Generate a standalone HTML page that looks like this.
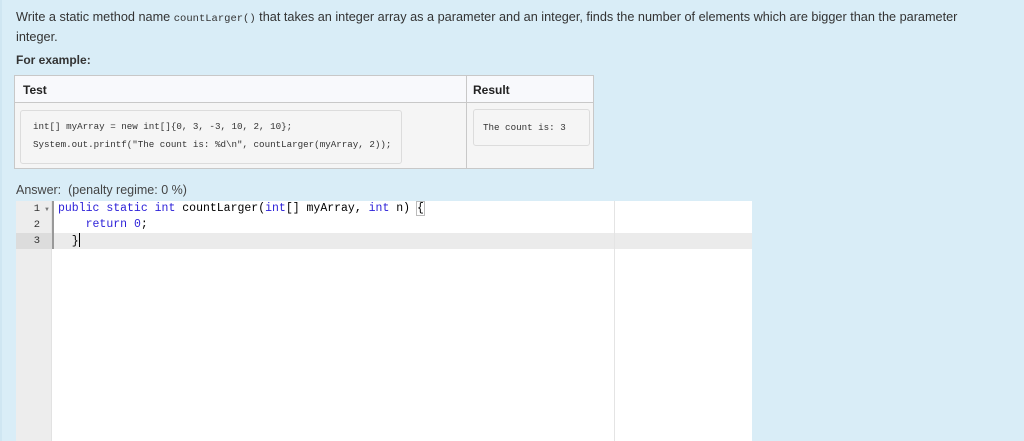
<!DOCTYPE html>
<html><head><meta charset="utf-8"><style>
*{margin:0;padding:0;box-sizing:border-box}
html,body{width:1024px;height:441px;overflow:hidden;background:#d9edf7;font-family:"Liberation Sans",Arial,sans-serif;color:#333}
.left{position:absolute;left:0;top:0;width:2px;height:441px;background:#cfe6f2}
.p{position:absolute;left:16px;top:8px;width:960px;font-size:12.7px;line-height:18px}
.p code{font-family:"Liberation Mono",monospace;font-size:10.5px;letter-spacing:0}
.fe{position:absolute;left:16px;top:53px;font-size:12px;font-weight:bold}
.tbl{position:absolute;left:14px;top:75px;width:580px;height:94px;border:1px solid #c8c8c8;background:#f5f5f5}
.hd{position:absolute;left:0;top:0;width:578px;height:27px;background:#f8f9fc;border-bottom:1px solid #c8c8c8}
.vd{position:absolute;left:451px;top:0;width:1px;height:92px;background:#c8c8c8}
.th{position:absolute;top:7px;font-size:12px;font-weight:bold;color:#222}
.pre{position:absolute;background:#f5f5f5;border:1px solid #dcdcdc;border-radius:3px;font-family:"Liberation Mono",monospace;font-size:9.2px;color:#333;white-space:pre;line-height:18px}
.ans{position:absolute;left:16px;top:183px;font-size:12.5px;color:#444}
.ed{position:absolute;left:16px;top:201px;width:736px;height:240px;background:#fff}
.gut{position:absolute;left:0;top:0;width:36px;height:240px;background:#ededed;border-right:1px solid #e2e2e2}
.gl{position:absolute;left:0;width:36px;height:16px;font-family:"Liberation Mono",monospace;font-size:10.5px;line-height:16px;text-align:right;padding-right:12px;color:#333}
.gbar{position:absolute;left:36px;top:0;width:2px;height:48px;background:#999}
.hl{position:absolute;left:38px;top:32px;width:698px;height:16px;background:#ebebeb}
.pm{position:absolute;left:598px;top:0;width:1px;height:240px;background:#e4e4e4}
.cl{position:absolute;left:42px;height:16px;font-family:"Liberation Mono",monospace;font-size:11.5px;line-height:16px;white-space:pre;color:#000}
.k{color:#2b1fd8}
.n{color:#2b1fd8}
</style></head><body>
<div class="left"></div>
<div class="p">Write a static method name <code>countLarger()</code> that takes an integer array as a parameter and an integer, finds the number of elements which are bigger than the parameter integer.</div>
<div class="fe">For example:</div>
<div class="tbl">
 <div class="hd"></div>
 <div class="vd"></div>
 <div class="th" style="left:8px">Test</div>
 <div class="th" style="left:458px">Result</div>
 <div class="pre" style="left:5px;top:34px;width:382px;height:54px;padding:7px 0 0 12px">int[] myArray = new int[]{0, 3, -3, 10, 2, 10};
System.out.printf("The count is: %d\n", countLarger(myArray, 2));</div>
 <div class="pre" style="left:458px;top:33px;width:117px;height:37px;padding:9px 0 0 9px">The count is: 3</div>
</div>
<div class="ans">Answer: &nbsp;(penalty regime: 0 %)</div>
<div class="ed">
 <div class="gut"></div>
 <div class="hl"></div>
 <div class="gl" style="top:32px;background:#dcdcdc"></div>
 <div class="gl" style="top:0">1</div>
 <div style="position:absolute;left:28px;top:6px;font-size:6px;color:#777">&#9660;</div>
 <div class="gl" style="top:16px">2</div>
 <div class="gl" style="top:32px">3</div>
 <div class="gbar"></div>
 <div class="pm"></div>
 <div class="cl" style="top:0"><span class="k">public</span> <span class="k">static</span> <span class="k">int</span> countLarger(<span class="k">int</span>[] myArray, <span class="k">int</span> n) <span style="outline:1px solid #bbb">{</span></div>
 <div class="cl" style="top:16px">    <span class="k">return</span> <span class="n">0</span>;</div>
 <div class="cl" style="top:32px">  }<span style="display:inline-block;width:1px;height:14px;background:#000;vertical-align:-3px"></span></div>
</div>
</body></html>
